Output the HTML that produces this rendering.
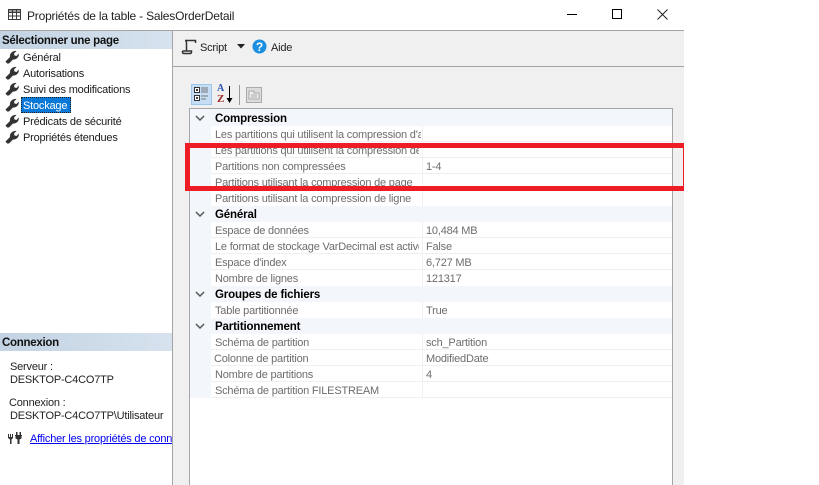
<!DOCTYPE html>
<html><head><meta charset="utf-8">
<style>
html,body{margin:0;padding:0;background:#fff;width:819px;height:485px;overflow:hidden}
body{position:relative;font-family:"Liberation Sans",sans-serif;font-size:11px;letter-spacing:-.2px;color:#000}
.a{position:absolute}
.t{position:absolute;white-space:nowrap;line-height:16px;height:16px;margin-top:1px}
.n{left:215px;color:#6d6d6d;width:206px;overflow:hidden}
.v{left:426px;color:#6d6d6d}
.h{left:215px;font-weight:bold;color:#000;font-size:11.5px;letter-spacing:-.15px}
.b{font-weight:bold;color:#111;font-size:11.5px;letter-spacing:-.28px}
.ln{position:absolute;left:211px;width:461px;height:1px;background:#f0f0f0}
.chev{position:absolute;left:195px;width:10px;height:6px}
.wr{position:absolute;left:5px;width:14px;height:14px}
.m{position:absolute;left:23px;white-space:nowrap;line-height:16px;color:#1a1a1a;margin-top:1px}
</style></head><body>
<svg width="0" height="0" style="position:absolute"><defs>
<symbol id="w" viewBox="0 0 14 14"><path d="M2 13.500 L.5 11.500 L5 7 C4.500 3 8 .5 11.500 1 L9 3.500 L9.500 5.500 L11.500 6 L13.800 3.500 C14.200 7.500 11 10 8 9.500 L4 13.500 Z" fill="#333"/></symbol>
<symbol id="c" viewBox="0 0 10 6"><path d="M1 1 L5 5 L9 1" fill="none" stroke="#555" stroke-width="1.5"/></symbol>
</defs></svg>

<!-- title bar -->
<svg class="a" style="left:8px;top:8px" width="14" height="14"><g fill="none" stroke="#3a3a3a" stroke-width="1"><rect x=".5" y="1.500" width="12" height="10"/><path d="M.5 4.500H12.500M.5 8H12.500M4.500 1.500V11.500M8.500 1.500V11.500"/></g><rect x="0" y="1" width="13" height="3" fill="#3a3a3a" opacity=".5"/></svg>
<div class="t" style="left:27px;top:7px;font-size:12px;letter-spacing:-.2px;color:#222">Propriétés de la table - SalesOrderDetail</div>
<div class="a" style="left:567px;top:14px;width:10px;height:1px;background:#000"></div>
<div class="a" style="left:612px;top:9px;width:8px;height:8px;border:1px solid #000"></div>
<svg class="a" style="left:657px;top:9px" width="11" height="11"><path d="M.5 .5L10.500 10.500M10.500 .5L.5 10.500" stroke="#222" stroke-width="1"/></svg>

<div class="a" style="left:0;top:30px;width:684px;height:1px;background:#a5a5a5"></div>

<!-- left panel -->
<div class="a" style="left:0;top:31px;width:172px;height:18px;background:linear-gradient(90deg,#c3d3e3,#d6e2ee)"></div>
<div class="t b" style="left:2px;top:32px">Sélectionner une page</div>

<svg class="wr" style="top:50px"><use href="#w"/></svg>
<svg class="wr" style="top:66px"><use href="#w"/></svg>
<svg class="wr" style="top:82px"><use href="#w"/></svg>
<svg class="wr" style="top:98px"><use href="#w"/></svg>
<svg class="wr" style="top:114px"><use href="#w"/></svg>
<svg class="wr" style="top:130px"><use href="#w"/></svg>
<div class="m" style="top:49px">Général</div>
<div class="m" style="top:65px">Autorisations</div>
<div class="m" style="top:81px">Suivi des modifications</div>
<div class="a" style="left:21px;top:97px;width:50px;height:16px;background:#0a78d7;outline:1px dotted #222;outline-offset:-1px"></div>
<div class="m" style="top:97px;color:#fff">Stockage</div>
<div class="m" style="top:113px">Prédicats de sécurité</div>
<div class="m" style="top:129px">Propriétés étendues</div>

<div class="a" style="left:0;top:333px;width:172px;height:18px;background:linear-gradient(90deg,#c3d3e3,#d6e2ee)"></div>
<div class="t b" style="left:2px;top:334px">Connexion</div>
<div class="t" style="left:10px;top:358px;color:#222">Serveur :</div>
<div class="t" style="left:10px;top:371px;color:#222">DESKTOP-C4CO7TP</div>
<div class="t" style="left:9px;top:394px;color:#222">Connexion :</div>
<div class="t" style="left:10px;top:407px;color:#222">DESKTOP-C4CO7TP\Utilisateur</div>
<svg class="a" style="left:8px;top:431px" width="14" height="14"><g fill="#333"><path d="M0 3h1v3h1V3h1v3h1V3h1v4L3.500 8.500V13h-1.500V8.500L0 7z"/><path d="M7 4h7v1H7zM8 1h1.500v3H8zM11.500 1H13v3h-1.500zM7.500 5h6v2.500l-2 1V13h-2V8.500l-2-1z"/></g></svg>
<div class="t" style="left:30px;top:430px;width:142px;overflow:hidden;color:#0000ee;text-decoration:underline">Afficher les propriétés de connexion</div>

<!-- right panel -->
<div class="a" style="left:172px;top:31px;width:1px;height:454px;background:#a5a5a5"></div>
<div class="a" style="left:173px;top:31px;width:511px;height:454px;background:#f0f0f0"></div>
<div class="a" style="left:173px;top:66px;width:511px;height:1px;background:#a5a5a5"></div>

<!-- toolbar -->
<svg class="a" style="left:181px;top:39px" width="16" height="16"><path d="M4 1.500H14.500V4M4 1.500C5.500 1.500 5.500 3 5.500 4V11.500M1.500 12V13C1.500 14 2 14.500 3 14.500H9C10 14.500 10.500 14 10.500 13V12H1.500" fill="none" stroke="#333" stroke-width="1.500"/></svg>
<div class="t" style="left:200px;top:39px;color:#222">Script</div>
<svg class="a" style="left:237px;top:44px" width="9" height="5"><path d="M0 0H8L4 4.500Z" fill="#222"/></svg>
<svg class="a" style="left:252px;top:39px" width="15" height="15"><circle cx="7.500" cy="7.500" r="7" fill="#1c8fe0"/><text x="7.500" y="12" text-anchor="middle" font-family="Liberation Sans" font-weight="bold" font-size="12" fill="#fff">?</text></svg>
<div class="t" style="left:271px;top:39px;color:#222">Aide</div>

<!-- grid toolbar -->
<div class="a" style="left:191px;top:84px;width:21px;height:21px;background:#c5def5;border:1px solid #9cc6ea;box-sizing:border-box"></div>
<svg class="a" style="left:194px;top:86px" width="16" height="17"><g fill="#fff" stroke="#333"><rect x=".5" y="1.500" width="5" height="5"/><rect x=".5" y="9.500" width="5" height="5"/></g><path d="M2 4h2M3 3v2M2 12h2M3 11v2" stroke="#000"/><path d="M7 2h7M7 4h7M7 6h7M7 10h7M7 13h5" stroke="#777"/></svg>
<div class="t" style="left:217px;top:84px;font-size:10px;font-weight:bold;color:#2a4fb0;line-height:10px;margin:0;font-family:'Liberation Serif',serif">A</div>
<div class="t" style="left:217px;top:94px;font-size:11px;font-weight:bold;color:#9c2a2a;line-height:10px;margin:0;font-family:'Liberation Serif',serif">Z</div>
<svg class="a" style="left:226px;top:86px" width="7" height="18"><path d="M3.500 0V15" stroke="#000"/><path d="M.5 12H6.500L3.500 17Z" fill="#000"/></svg>
<div class="a" style="left:239px;top:85px;width:1px;height:20px;background:#999"></div>
<svg class="a" style="left:246px;top:87px" width="16" height="16"><rect x=".5" y=".5" width="15" height="15" fill="#dcdcdc" stroke="#aaa"/><path d="M3 4H8V6H13V12H3Z" fill="#eee" stroke="#aaa"/><path d="M5 8H11M5 10H11" stroke="#aaa"/></svg>

<!-- grid -->
<div class="a" style="left:189px;top:108px;width:484px;height:377px;background:#fff;border:1px solid #a5a5a5;border-bottom:0;box-sizing:border-box"></div>
<div class="a" style="left:190px;top:109px;width:482px;height:17px;background:#f3f6fb"></div>
<div class="a" style="left:190px;top:126px;width:21px;height:80px;background:#f3f6fb"></div>
<div class="a" style="left:190px;top:206px;width:482px;height:16px;background:#f3f6fb"></div>
<div class="a" style="left:190px;top:222px;width:21px;height:64px;background:#f3f6fb"></div>
<div class="a" style="left:190px;top:286px;width:482px;height:16px;background:#f3f6fb"></div>
<div class="a" style="left:190px;top:302px;width:21px;height:16px;background:#f3f6fb"></div>
<div class="a" style="left:190px;top:318px;width:482px;height:16px;background:#f3f6fb"></div>
<div class="a" style="left:190px;top:334px;width:21px;height:64px;background:#f3f6fb"></div>

<div class="ln" style="top:141px"></div><div class="ln" style="top:157px"></div><div class="ln" style="top:173px"></div><div class="ln" style="top:189px"></div>
<div class="ln" style="top:237px"></div><div class="ln" style="top:253px"></div><div class="ln" style="top:269px"></div>
<div class="ln" style="top:349px"></div><div class="ln" style="top:365px"></div><div class="ln" style="top:381px"></div><div class="ln" style="top:397px"></div>
<div class="a" style="left:422px;top:126px;width:1px;height:80px;background:#f0f0f0"></div>
<div class="a" style="left:422px;top:222px;width:1px;height:64px;background:#f0f0f0"></div>
<div class="a" style="left:422px;top:302px;width:1px;height:16px;background:#f0f0f0"></div>
<div class="a" style="left:422px;top:334px;width:1px;height:64px;background:#f0f0f0"></div>

<svg class="chev" style="top:115px"><use href="#c"/></svg>
<svg class="chev" style="top:211px"><use href="#c"/></svg>
<svg class="chev" style="top:291px"><use href="#c"/></svg>
<svg class="chev" style="top:323px"><use href="#c"/></svg>

<div class="t h" style="top:110px">Compression</div>
<div class="t n" style="top:126px">Les partitions qui utilisent la compression d'archivage</div>
<div class="t n" style="top:142px;width:204px">Les partitions qui utilisent la compression de columnstore</div>
<div class="t n" style="top:158px">Partitions non compressées</div><div class="t v" style="top:158px">1-4</div>
<div class="t n" style="top:174px">Partitions utilisant la compression de page</div>
<div class="t n" style="top:190px">Partitions utilisant la compression de ligne</div>
<div class="t h" style="top:206px">Général</div>
<div class="t n" style="top:222px">Espace de données</div><div class="t v" style="top:222px">10,484 MB</div>
<div class="t n" style="top:238px;width:204px">Le format de stockage VarDecimal est activé</div><div class="t v" style="top:238px">False</div>
<div class="t n" style="top:254px">Espace d'index</div><div class="t v" style="top:254px">6,727 MB</div>
<div class="t n" style="top:270px">Nombre de lignes</div><div class="t v" style="top:270px">121317</div>
<div class="t h" style="top:286px">Groupes de fichiers</div>
<div class="t n" style="top:302px">Table partitionnée</div><div class="t v" style="top:302px">True</div>
<div class="t h" style="top:318px">Partitionnement</div>
<div class="t n" style="top:334px">Schéma de partition</div><div class="t v" style="top:334px">sch_Partition</div>
<div class="t n" style="top:350px;left:214px">Colonne de partition</div><div class="t v" style="top:350px">ModifiedDate</div>
<div class="t n" style="top:366px">Nombre de partitions</div><div class="t v" style="top:366px">4</div>
<div class="t n" style="top:382px">Schéma de partition FILESTREAM</div>

<!-- red highlight -->
<div class="a" style="left:185px;top:143px;width:499px;height:5px;background:#ee1c25"></div>
<div class="a" style="left:185px;top:186px;width:499px;height:5px;background:#ee1c25"></div>
<div class="a" style="left:185px;top:143px;width:5px;height:48px;background:#ee1c25"></div>
<div class="a" style="left:683px;top:143px;width:1px;height:48px;background:#ee1c25"></div>
</body></html>
